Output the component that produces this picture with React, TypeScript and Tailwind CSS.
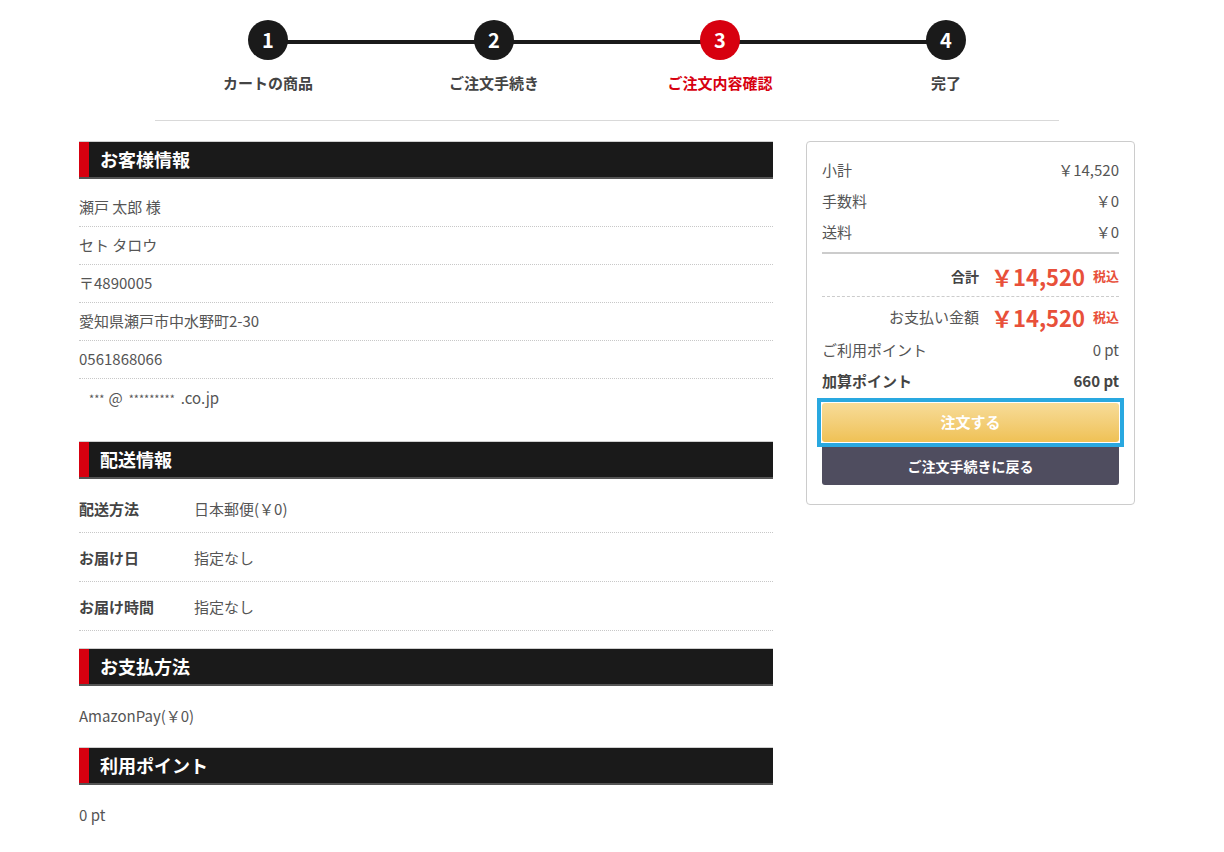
import React from "react";

const font = { fontFamily: '"Noto Sans CJK JP", "Noto Sans", sans-serif' };

const steps = ["カートの商品", "ご注文手続き", "ご注文内容確認", "完了"];

function Steps() {
  return (
    <div className="mx-[76px] border-b border-[#d9d9d9] pb-[26px]">
      <div className="relative grid grid-cols-4">
        <div className="absolute left-[113px] right-[113px] top-[20px] h-[4px] bg-[#1a1a1a]" />
        {steps.map((s, i) => (
          <div key={s} className="relative flex flex-col items-center">
            <div
              className={
                "flex h-[40px] w-[40px] items-center justify-center rounded-full text-[20px] font-bold text-white " +
                (i === 2 ? "bg-[#d7000f]" : "bg-[#1a1a1a]")
              }
            >
              {i + 1}
            </div>
            <div
              className={
                "mt-[12px] text-[15px] font-bold leading-[22px] " +
                (i === 2 ? "text-[#d7000f]" : "text-[#444]")
              }
            >
              {s}
            </div>
          </div>
        ))}
      </div>
    </div>
  );
}

function SectionTitle({ children }: { children: React.ReactNode }) {
  return (
    <div className="flex h-[38px] border-t border-t-[#cfcfcf] border-b-2 border-b-[#555] bg-[#1a1a1a]">
      <div className="w-[10px] bg-[#d7000f]" />
      <div className="flex items-center pl-[11px] text-[18px] font-bold text-white">{children}</div>
    </div>
  );
}

function InfoRow({ children, last }: { children: React.ReactNode; last?: boolean }) {
  return (
    <div
      className={
        "flex h-[38px] items-center text-[15px] text-[#555] " +
        (last ? "" : "border-b border-dotted border-[#c8c8c8]")
      }
    >
      {children}
    </div>
  );
}

function ShipRow({ label, value }: { label: string; value: string }) {
  return (
    <div className="flex h-[49px] items-center border-b border-dotted border-[#c8c8c8] pt-[2px] text-[15px] text-[#555]">
      <div className="w-[115px] font-bold text-[#444]">{label}</div>
      <div>{value}</div>
    </div>
  );
}

function SumRow({ label, value }: { label: string; value: string }) {
  return (
    <div className="flex h-[31px] items-center justify-between text-[15px] text-[#555]">
      <span>{label}</span>
      <span>{value}</span>
    </div>
  );
}

export default function App() {
  return (
    <div className="min-h-[852px] bg-white" style={font}>
      <div className="ml-[79px] w-[1056px] pt-[20px]">
        <Steps />
        <div className="mt-[20px] flex gap-[33px]">
          <div className="w-[694px]">
            <SectionTitle>お客様情報</SectionTitle>
            <div className="mt-[10px]">
              <InfoRow>瀬戸 太郎 様</InfoRow>
              <InfoRow>セト タロウ</InfoRow>
              <InfoRow>〒4890005</InfoRow>
              <InfoRow>愛知県瀬戸市中水野町2-30</InfoRow>
              <InfoRow>0561868066</InfoRow>
              <InfoRow last>
                <span className="pl-[10px] text-[11px]">***</span>
                <span className="pl-[4px]">@</span>
                <span className="pl-[6px] text-[11px]">*********</span>
                <span className="pl-[6px]">.co.jp</span>
              </InfoRow>
            </div>
            <div className="mt-[24px]">
              <SectionTitle>配送情報</SectionTitle>
            </div>
            <div className="mt-[5px]">
              <ShipRow label="配送方法" value="日本郵便(￥0)" />
              <ShipRow label="お届け日" value="指定なし" />
              <ShipRow label="お届け時間" value="指定なし" />
            </div>
            <div className="mt-[17px]">
              <SectionTitle>お支払方法</SectionTitle>
            </div>
            <div className="flex h-[61px] items-center text-[15px] text-[#555]">AmazonPay(￥0)</div>
            <SectionTitle>利用ポイント</SectionTitle>
            <div className="flex h-[61px] items-center text-[15px] text-[#555]">0 pt</div>
          </div>

          <div className="h-[364px] w-[329px] rounded-[4px] border border-[#ccc] px-[15px] pt-[13px]">
            <SumRow label="小計" value="￥14,520" />
            <SumRow label="手数料" value="￥0" />
            <SumRow label="送料" value="￥0" />
            <div className="mt-[4px] h-[2px] bg-[#ccc]" />
            <div className="flex h-[43px] items-center justify-end border-b border-dashed border-[#ccc] pt-[2px]">
              <span className="mr-[12px] text-[14px] font-bold text-[#444]">合計</span>
              <span className="text-[22px] font-bold text-[#e8503a]">￥14,520</span>
              <span className="ml-[8px] text-[13px] font-bold text-[#e8503a]">税込</span>
            </div>
            <div className="flex h-[38px] items-center justify-end pt-[2px]">
              <span className="mr-[12px] text-[15px] text-[#555]">お支払い金額</span>
              <span className="text-[22px] font-bold text-[#e8503a]">￥14,520</span>
              <span className="ml-[8px] text-[13px] font-bold text-[#e8503a]">税込</span>
            </div>
            <SumRow label="ご利用ポイント" value="0 pt" />
            <div className="flex h-[31px] items-center justify-between text-[15px] font-bold text-[#444]">
              <span>加算ポイント</span>
              <span>660 pt</span>
            </div>
            <div className="-mx-[5px] mt-[1px] border-[4px] border-[#29a8e0] p-[1px]">
              <button className="flex h-[39px] w-full items-center justify-center rounded-[3px] bg-gradient-to-b from-[#f7dc98] to-[#efc154] text-[15px] font-bold text-white">
                注文する
              </button>
            </div>
            <button className="flex h-[38px] w-full items-center justify-center rounded-b-[3px] bg-[#4f4d5f] text-[14px] font-bold text-white">
              ご注文手続きに戻る
            </button>
          </div>
        </div>
      </div>
    </div>
  );
}
